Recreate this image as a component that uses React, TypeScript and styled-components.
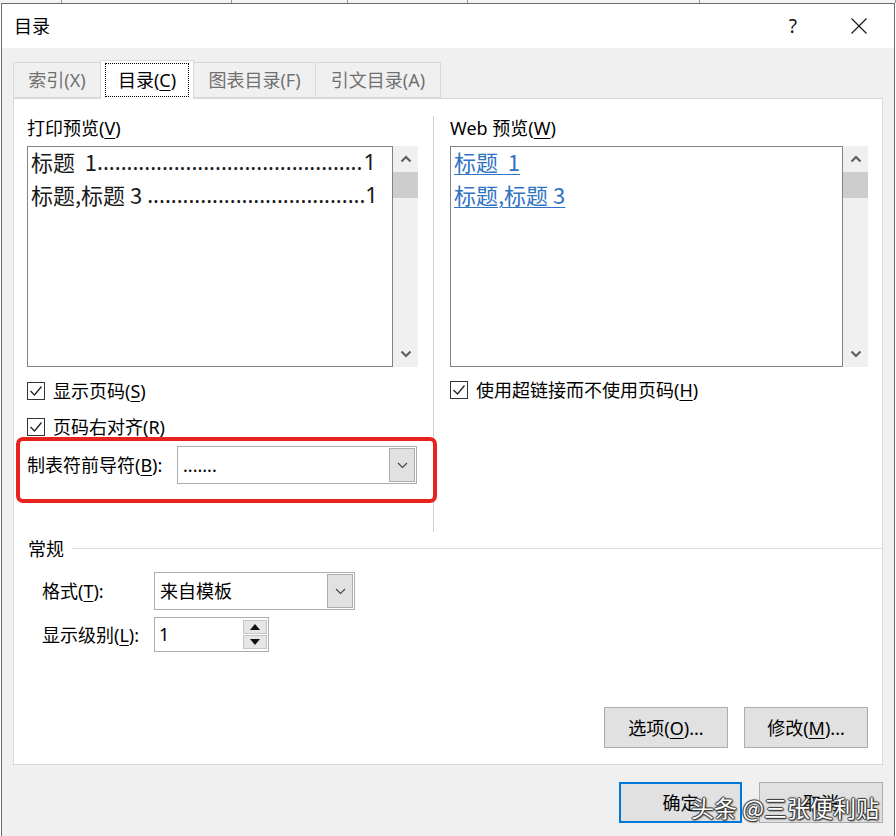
import React from 'react';
import styled, { createGlobalStyle } from 'styled-components';

const GlobalStyle = createGlobalStyle`
  html, body { margin: 0; padding: 0; background: #ffffff; }
  body {
    width: 896px; height: 836px; overflow: hidden;
    font-family: "Noto Sans", "Noto Sans CJK SC", sans-serif;
    color: #000;
  }
  * { box-sizing: border-box; }
`;

const Page = styled.div`
  position: relative;
  width: 896px;
  height: 836px;
  overflow: hidden;
  background: #ffffff;
`;

const BackStrip = styled.div`
  height: 3px;
  overflow: hidden;
  display: flex;
  background: #f4f4f4;
`;

const BackCell = styled.div<{ $w: number }>`
  width: ${p => p.$w}px;
  flex: none;
  border-right: 1px solid #9a9a9a;
`;

const Dialog = styled.div`
  margin-left: 1px;
  width: 894px;
  height: 833px;
  border: 1px solid #6b6b6b;
  border-bottom: none;
  background: #f0f0f0;
  display: flex;
  flex-direction: column;
`;

const TitleBar = styled.div`
  height: 44px;
  flex: none;
  background: #ffffff;
  display: flex;
  align-items: center;
  justify-content: space-between;
  padding: 0 27px 0 12px;
`;

const TitleText = styled.div`
  font-size: 18px;
  line-height: 24px;
`;

const TitleTools = styled.div`
  display: flex;
  align-items: center;
  gap: 54px;
`;

const HelpGlyph = styled.span`
  font-size: 19px;
  line-height: 24px;
  color: #111;
`;

const Body = styled.div`
  flex: 1;
  padding: 12px 11px 0 11px;
  display: flex;
  flex-direction: column;
`;

const TabStrip = styled.div`
  height: 38px;
  display: flex;
  align-items: flex-end;
  position: relative;
  z-index: 1;
`;

const Tab = styled.div<{ $w: number; $active?: boolean }>`
  width: ${p => p.$w}px;
  height: ${p => (p.$active ? 39 : 36)}px;
  margin-bottom: ${p => (p.$active ? -1 : 0)}px;
  margin-left: -1px;
  background: ${p => (p.$active ? '#ffffff' : '#f0f0f0')};
  border: 1px solid #d9d9d9;
  border-bottom: ${p => (p.$active ? 'none' : '1px solid #d9d9d9')};
  display: flex;
  align-items: stretch;
  justify-content: center;
  padding: ${p => (p.$active ? '2px 4px 2px 4px' : '0')};
  font-size: 18px;
  color: ${p => (p.$active ? '#000' : '#707070')};
  &:first-child { margin-left: 0; }
`;

const TabLabel = styled.span<{ $focus?: boolean }>`
  flex: 1;
  display: flex;
  align-items: center;
  justify-content: center;
  border: 1px dotted ${p => (p.$focus ? '#000' : 'transparent')};
  line-height: 24px;
`;

const Panel = styled.div`
  height: 667px;
  flex: none;
  background: #ffffff;
  border: 1px solid #d9d9d9;
  display: flex;
  flex-direction: column;
  padding-top: 17px;
`;

const TopSection = styled.div`
  height: 416px;
  display: grid;
  grid-template-columns: 419px 1px 1fr;
`;

const LeftCol = styled.div`
  padding-left: 13px;
  display: flex;
  flex-direction: column;
`;

const RightCol = styled.div`
  padding: 0 14px 0 16px;
  display: flex;
  flex-direction: column;
`;

const Divider = styled.div`
  background: #cfcfcf;
`;

const FieldLabel = styled.div`
  font-size: 18px;
  line-height: 24px;
  height: 24px;
  white-space: nowrap;
`;

const Key = styled.span`
  text-decoration: underline;
  text-underline-offset: 3px;
  text-decoration-thickness: 1px;
`;

const ListRow = styled.div`
  margin-top: 6px;
  height: 221px;
  display: flex;
`;

const ListBox = styled.div<{ $w: number }>`
  width: ${p => p.$w}px;
  flex: none;
  border: 1px solid #838383;
  background: #ffffff;
  padding: 0 16px 0 3px;
  font-size: 22px;
  line-height: 33px;
  font-family: "Noto Sans CJK SC", "Noto Sans", sans-serif;
  overflow: hidden;
`;

const ListContent = styled.div`
  margin-top: -2px;
`;

const TocEntry = styled.div`
  display: flex;
  white-space: nowrap;
  color: #1a1a1a;
`;

const Leaders = styled.span`
  flex: none;
  white-space: nowrap;
  font-family: "Noto Sans", sans-serif;
`;

const PageNum = styled.span`
  flex: none;
  margin-left: auto;
  font-family: "Noto Sans", sans-serif;
`;

const WebLink = styled.div`
  color: #2f73c3;
  text-decoration: underline;
  text-underline-offset: 3px;
  text-decoration-thickness: 1px;
  width: fit-content;
`;

const Scrollbar = styled.div`
  width: 25px;
  flex: none;
  background: #f0f0f0;
  display: flex;
  flex-direction: column;
`;

const ScrollArrow = styled.div`
  height: 26px;
  flex: none;
  display: flex;
  align-items: center;
  justify-content: center;
`;

const ScrollThumb = styled.div`
  height: 26px;
  flex: none;
  background: #cdcdcd;
`;

const ScrollTrack = styled.div`
  flex: 1;
`;

const CheckRow = styled.div<{ $mt: number }>`
  margin-top: ${p => p.$mt}px;
  height: 24px;
  display: flex;
  align-items: center;
  gap: 8px;
  font-size: 18px;
  line-height: 24px;
  white-space: nowrap;
`;

const CheckBox = styled.div`
  width: 18px;
  height: 18px;
  flex: none;
  border: 1px solid #333333;
  background: #ffffff;
  display: flex;
  align-items: center;
  justify-content: center;
`;

const LeaderBox = styled.div`
  margin: -2px 0 0 -11px;
  width: 421px;
  height: 66px;
  border: 4px solid #e8231d;
  border-radius: 7px;
  padding: 5px 16px 15px 7px;
  display: flex;
  align-items: center;
  position: relative;
  z-index: 1;
`;

const RowLabel = styled.div<{ $w: number }>`
  width: ${p => p.$w}px;
  flex: none;
  font-size: 18px;
  line-height: 24px;
  white-space: nowrap;
`;

const Combo = styled.div<{ $w: number; $h: number }>`
  width: ${p => p.$w}px;
  height: ${p => p.$h}px;
  flex: none;
  border: 1px solid #adadad;
  background: #ffffff;
  padding: 1px;
  display: flex;
  align-items: stretch;
`;

const ComboValue = styled.div`
  flex: 1;
  display: flex;
  align-items: center;
  padding-left: 4px;
  font-size: 18px;
  line-height: 24px;
  white-space: nowrap;
`;

const DropButton = styled.div`
  width: 26px;
  flex: none;
  background: #e1e1e1;
  border: 1px solid #adadad;
  display: flex;
  align-items: center;
  justify-content: center;
`;

const GroupHeader = styled.div`
  margin-top: 5px;
  height: 24px;
  padding-left: 14px;
  display: flex;
  align-items: center;
  font-size: 18px;
  line-height: 24px;
`;

const GroupLine = styled.div`
  flex: 1;
  height: 1px;
  margin-left: 8px;
  margin-top: -2px;
  background: #dcdcdc;
`;

const FormRow = styled.div<{ $mt: number }>`
  margin-top: ${p => p.$mt}px;
  padding-left: 28px;
  display: flex;
  align-items: center;
`;

const Spin = styled.div`
  width: 115px;
  height: 35px;
  border: 1px solid #adadad;
  background: #ffffff;
  display: flex;
  padding: 2px 1px 2px 0;
`;

const SpinValue = styled.div`
  flex: 1;
  padding-left: 4px;
  font-size: 18px;
  line-height: 28px;
`;

const SpinButtons = styled.div`
  width: 24px;
  flex: none;
  display: flex;
  flex-direction: column;
  gap: 1px;
`;

const SpinButton = styled.div`
  flex: 1;
  background: #e6e6e6;
  border: 1px solid #c4c4c4;
  display: flex;
  align-items: center;
  justify-content: center;
`;

const ActionRow = styled.div`
  margin-top: auto;
  padding: 0 14px 16px 0;
  display: flex;
  justify-content: flex-end;
  gap: 16px;
`;

const Button = styled.div<{ $w: number; $default?: boolean }>`
  width: ${p => p.$w}px;
  height: 41px;
  background: #e1e1e1;
  border: ${p => (p.$default ? '2px solid #0078d7' : '1px solid #adadad')};
  display: flex;
  align-items: center;
  justify-content: center;
  font-size: 18px;
  line-height: 24px;
  white-space: nowrap;
`;

const Footer = styled.div`
  margin-top: 17px;
  display: flex;
  justify-content: flex-end;
  gap: 17px;
`;

const Watermark = styled.div`
  position: absolute;
  left: 691px;
  top: 792px;
  font-size: 23px;
  line-height: 30px;
  color: #ffffff;
  white-space: nowrap;
  font-family: "Noto Sans CJK SC", sans-serif;
  text-shadow: 1px 0 1px #333, -1px 0 1px #333, 0 1px 1px #333, 0 -1px 1px #333, 1px 1px 2px #222;
`;

const Check = () => (
  <CheckBox>
    <svg width="16" height="16" viewBox="0 0 16 16">
      <polyline points="2.5,8 6.5,12 13.5,3.5" fill="none" stroke="#222" strokeWidth="1.3" />
    </svg>
  </CheckBox>
);

const ChevronDown = () => (
  <svg width="11" height="7" viewBox="0 0 11 7">
    <polyline points="1,1 5.5,5.5 10,1" fill="none" stroke="#444" strokeWidth="1.1" />
  </svg>
);

const ScrollBarView = () => (
  <Scrollbar>
    <ScrollArrow>
      <svg width="12" height="8" viewBox="0 0 12 8">
        <polyline points="1.5,6.5 6,2 10.5,6.5" fill="none" stroke="#606060" strokeWidth="2.2" />
      </svg>
    </ScrollArrow>
    <ScrollThumb />
    <ScrollTrack />
    <ScrollArrow>
      <svg width="12" height="8" viewBox="0 0 12 8">
        <polyline points="1.5,1.5 6,6 10.5,1.5" fill="none" stroke="#606060" strokeWidth="2.2" />
      </svg>
    </ScrollArrow>
  </Scrollbar>
);

export default function App() {
  return (
    <Page>
      <GlobalStyle />
      <BackStrip>
        <BackCell $w={62} />
        <BackCell $w={170} />
        <BackCell $w={116} />
        <BackCell $w={120} />
        <BackCell $w={232} />
        <BackCell $w={196} />
      </BackStrip>
      <Dialog>
        <TitleBar>
          <TitleText>目录</TitleText>
          <TitleTools>
            <HelpGlyph>?</HelpGlyph>
            <svg width="16" height="16" viewBox="0 0 16 16">
              <line x1="0.5" y1="0.5" x2="15.5" y2="15.5" stroke="#111" strokeWidth="1.1" />
              <line x1="15.5" y1="0.5" x2="0.5" y2="15.5" stroke="#111" strokeWidth="1.1" />
            </svg>
          </TitleTools>
        </TitleBar>
        <Body>
          <TabStrip>
            <Tab $w={88}><TabLabel>索引(X)</TabLabel></Tab>
            <Tab $w={94} $active><TabLabel $focus>目录(<Key>C</Key>)</TabLabel></Tab>
            <Tab $w={123}><TabLabel>图表目录(F)</TabLabel></Tab>
            <Tab $w={126}><TabLabel>引文目录(A)</TabLabel></Tab>
          </TabStrip>
          <Panel>
            <TopSection>
              <LeftCol>
                <FieldLabel>打印预览(<Key>V</Key>)</FieldLabel>
                <ListRow>
                  <ListBox $w={366}>
                    <ListContent>
                      <TocEntry>
                        <span>标题&nbsp;&nbsp;1</span>
                        <Leaders>{'.'.repeat(45)}</Leaders>
                        <PageNum>1</PageNum>
                      </TocEntry>
                      <TocEntry>
                        <span>标题,标题 3&nbsp;</span>
                        <Leaders>{'.'.repeat(37)}</Leaders>
                        <PageNum>1</PageNum>
                      </TocEntry>
                    </ListContent>
                  </ListBox>
                  <ScrollBarView />
                </ListRow>
                <CheckRow $mt={12}>
                  <Check />
                  <span>显示页码(<Key>S</Key>)</span>
                </CheckRow>
                <CheckRow $mt={12}>
                  <Check />
                  <span>页码右对齐(<Key>R</Key>)</span>
                </CheckRow>
                <LeaderBox>
                  <RowLabel $w={150}>制表符前导符(<Key>B</Key>):</RowLabel>
                  <Combo $w={240} $h={38}>
                    <ComboValue>.......</ComboValue>
                    <DropButton><ChevronDown /></DropButton>
                  </Combo>
                </LeaderBox>
              </LeftCol>
              <Divider />
              <RightCol>
                <FieldLabel>Web 预览(<Key>W</Key>)</FieldLabel>
                <ListRow>
                  <ListBox $w={393}>
                    <ListContent>
                      <WebLink>标题&nbsp;&nbsp;1</WebLink>
                      <WebLink>标题,标题 3</WebLink>
                    </ListContent>
                  </ListBox>
                  <ScrollBarView />
                </ListRow>
                <CheckRow $mt={11}>
                  <Check />
                  <span>使用超链接而不使用页码(<Key>H</Key>)</span>
                </CheckRow>
              </RightCol>
            </TopSection>
            <GroupHeader>
              <span>常规</span>
              <GroupLine />
            </GroupHeader>
            <FormRow $mt={11}>
              <RowLabel $w={112}>格式(<Key>T</Key>):</RowLabel>
              <Combo $w={201} $h={38}>
                <ComboValue>来自模板</ComboValue>
                <DropButton><ChevronDown /></DropButton>
              </Combo>
            </FormRow>
            <FormRow $mt={7}>
              <RowLabel $w={112}>显示级别(<Key>L</Key>):</RowLabel>
              <Spin>
                <SpinValue>1</SpinValue>
                <SpinButtons>
                  <SpinButton>
                    <svg width="10" height="6" viewBox="0 0 10 6"><polygon points="0,6 5,0 10,6" fill="#111" /></svg>
                  </SpinButton>
                  <SpinButton>
                    <svg width="10" height="6" viewBox="0 0 10 6"><polygon points="0,0 10,0 5,6" fill="#111" /></svg>
                  </SpinButton>
                </SpinButtons>
              </Spin>
            </FormRow>
            <ActionRow>
              <Button $w={124}>选项(<Key>O</Key>)...</Button>
              <Button $w={124}>修改(<Key>M</Key>)...</Button>
            </ActionRow>
          </Panel>
          <Footer>
            <Button $w={123} $default>确定</Button>
            <Button $w={124}>取消</Button>
          </Footer>
        </Body>
      </Dialog>
      <Watermark>头条 @三张便利贴</Watermark>
    </Page>
  );
}
